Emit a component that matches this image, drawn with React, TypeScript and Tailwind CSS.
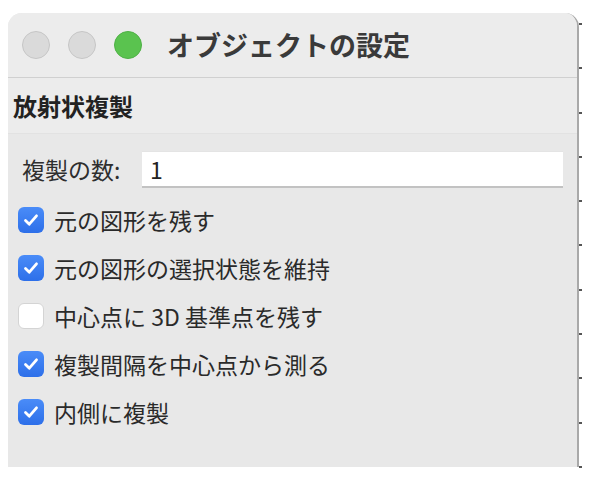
import React from 'react'

const font = { fontFamily: '"Noto Sans CJK JP", "Noto Sans", sans-serif' }

const options = [
  { label: '元の図形を残す', checked: true },
  { label: '元の図形の選択状態を維持', checked: true },
  { label: '中心点に 3D 基準点を残す', checked: false },
  { label: '複製間隔を中心点から測る', checked: true },
  { label: '内側に複製', checked: true },
]

function Checkbox({ checked }: { checked: boolean }) {
  if (!checked) {
    return <div className="h-[26px] w-[26px] shrink-0 rounded-[6px] border border-[#d4d4d4] bg-white" />
  }
  return (
    <div className="flex h-[26px] w-[26px] shrink-0 items-center justify-center rounded-[6px] bg-gradient-to-b from-[#4a8cf8] to-[#2d6fe9]">
      <svg width="18" height="18" viewBox="0 0 18 18" fill="none">
        <path d="M3.5 9.5 L7.3 13.2 L14.5 4.8" stroke="white" strokeWidth="2.8" strokeLinecap="round" strokeLinejoin="round" />
      </svg>
    </div>
  )
}

export default function App() {
  return (
    <div className="flex h-[482px] w-[598px] bg-white pl-[8px] pt-[13px]" style={font}>
      <div className="flex h-[454px] w-[571px] flex-col overflow-hidden rounded-t-[14px] border-r-2 border-[#a9a9a9] bg-[#e8e8e8]">
        <div className="flex h-[65px] shrink-0 items-center border-b border-[#d0d0d0] bg-[#ececec] pl-[14px]">
          <div className="flex gap-[18px]">
            <div className="h-[28px] w-[28px] rounded-full border border-[#c6c6c6] bg-[#dadada]" />
            <div className="h-[28px] w-[28px] rounded-full border border-[#c6c6c6] bg-[#dadada]" />
            <div className="h-[28px] w-[28px] rounded-full border border-[#4fb146] bg-[#5ac34f]" />
          </div>
          <span className="ml-[25px] text-[27px] font-bold text-[#3a3a3a]">オブジェクトの設定</span>
        </div>
        <div className="flex h-[56px] shrink-0 items-center border-b border-[#e2e2e2] bg-[#ececec] pl-[5px]">
          <span className="text-[24px] font-bold text-[#222]">放射状複製</span>
        </div>
        <div className="flex flex-col pl-[10px] pr-[14px] pt-[17px]">
          <div className="flex items-center">
            <span className="ml-[4px] w-[120px] text-[23px] text-[#2e2e2e]">複製の数:</span>
            <div className="flex h-[37px] flex-1 items-center border-b-2 border-t border-b-[#c2c2c2] border-t-[#e4e4e4] bg-white pl-[8px] text-[23px] text-[#222]">
              1
            </div>
          </div>
          <div className="mt-[19px] flex flex-col gap-[22px]">
            {options.map((o) => (
              <div key={o.label} className="flex h-[26px] items-center gap-[10px]">
                <Checkbox checked={o.checked} />
                <span className="text-[23px] text-[#2a2a2a]">{o.label}</span>
              </div>
            ))}
          </div>
        </div>
      </div>
      <div className="flex h-[455px] w-[3px] flex-col justify-between pt-[10px]">
        {Array.from({ length: 11 }).map((_, i) => (
          <div key={i} className="h-[2px] w-[3px] bg-[#555]" />
        ))}
      </div>
    </div>
  )
}
